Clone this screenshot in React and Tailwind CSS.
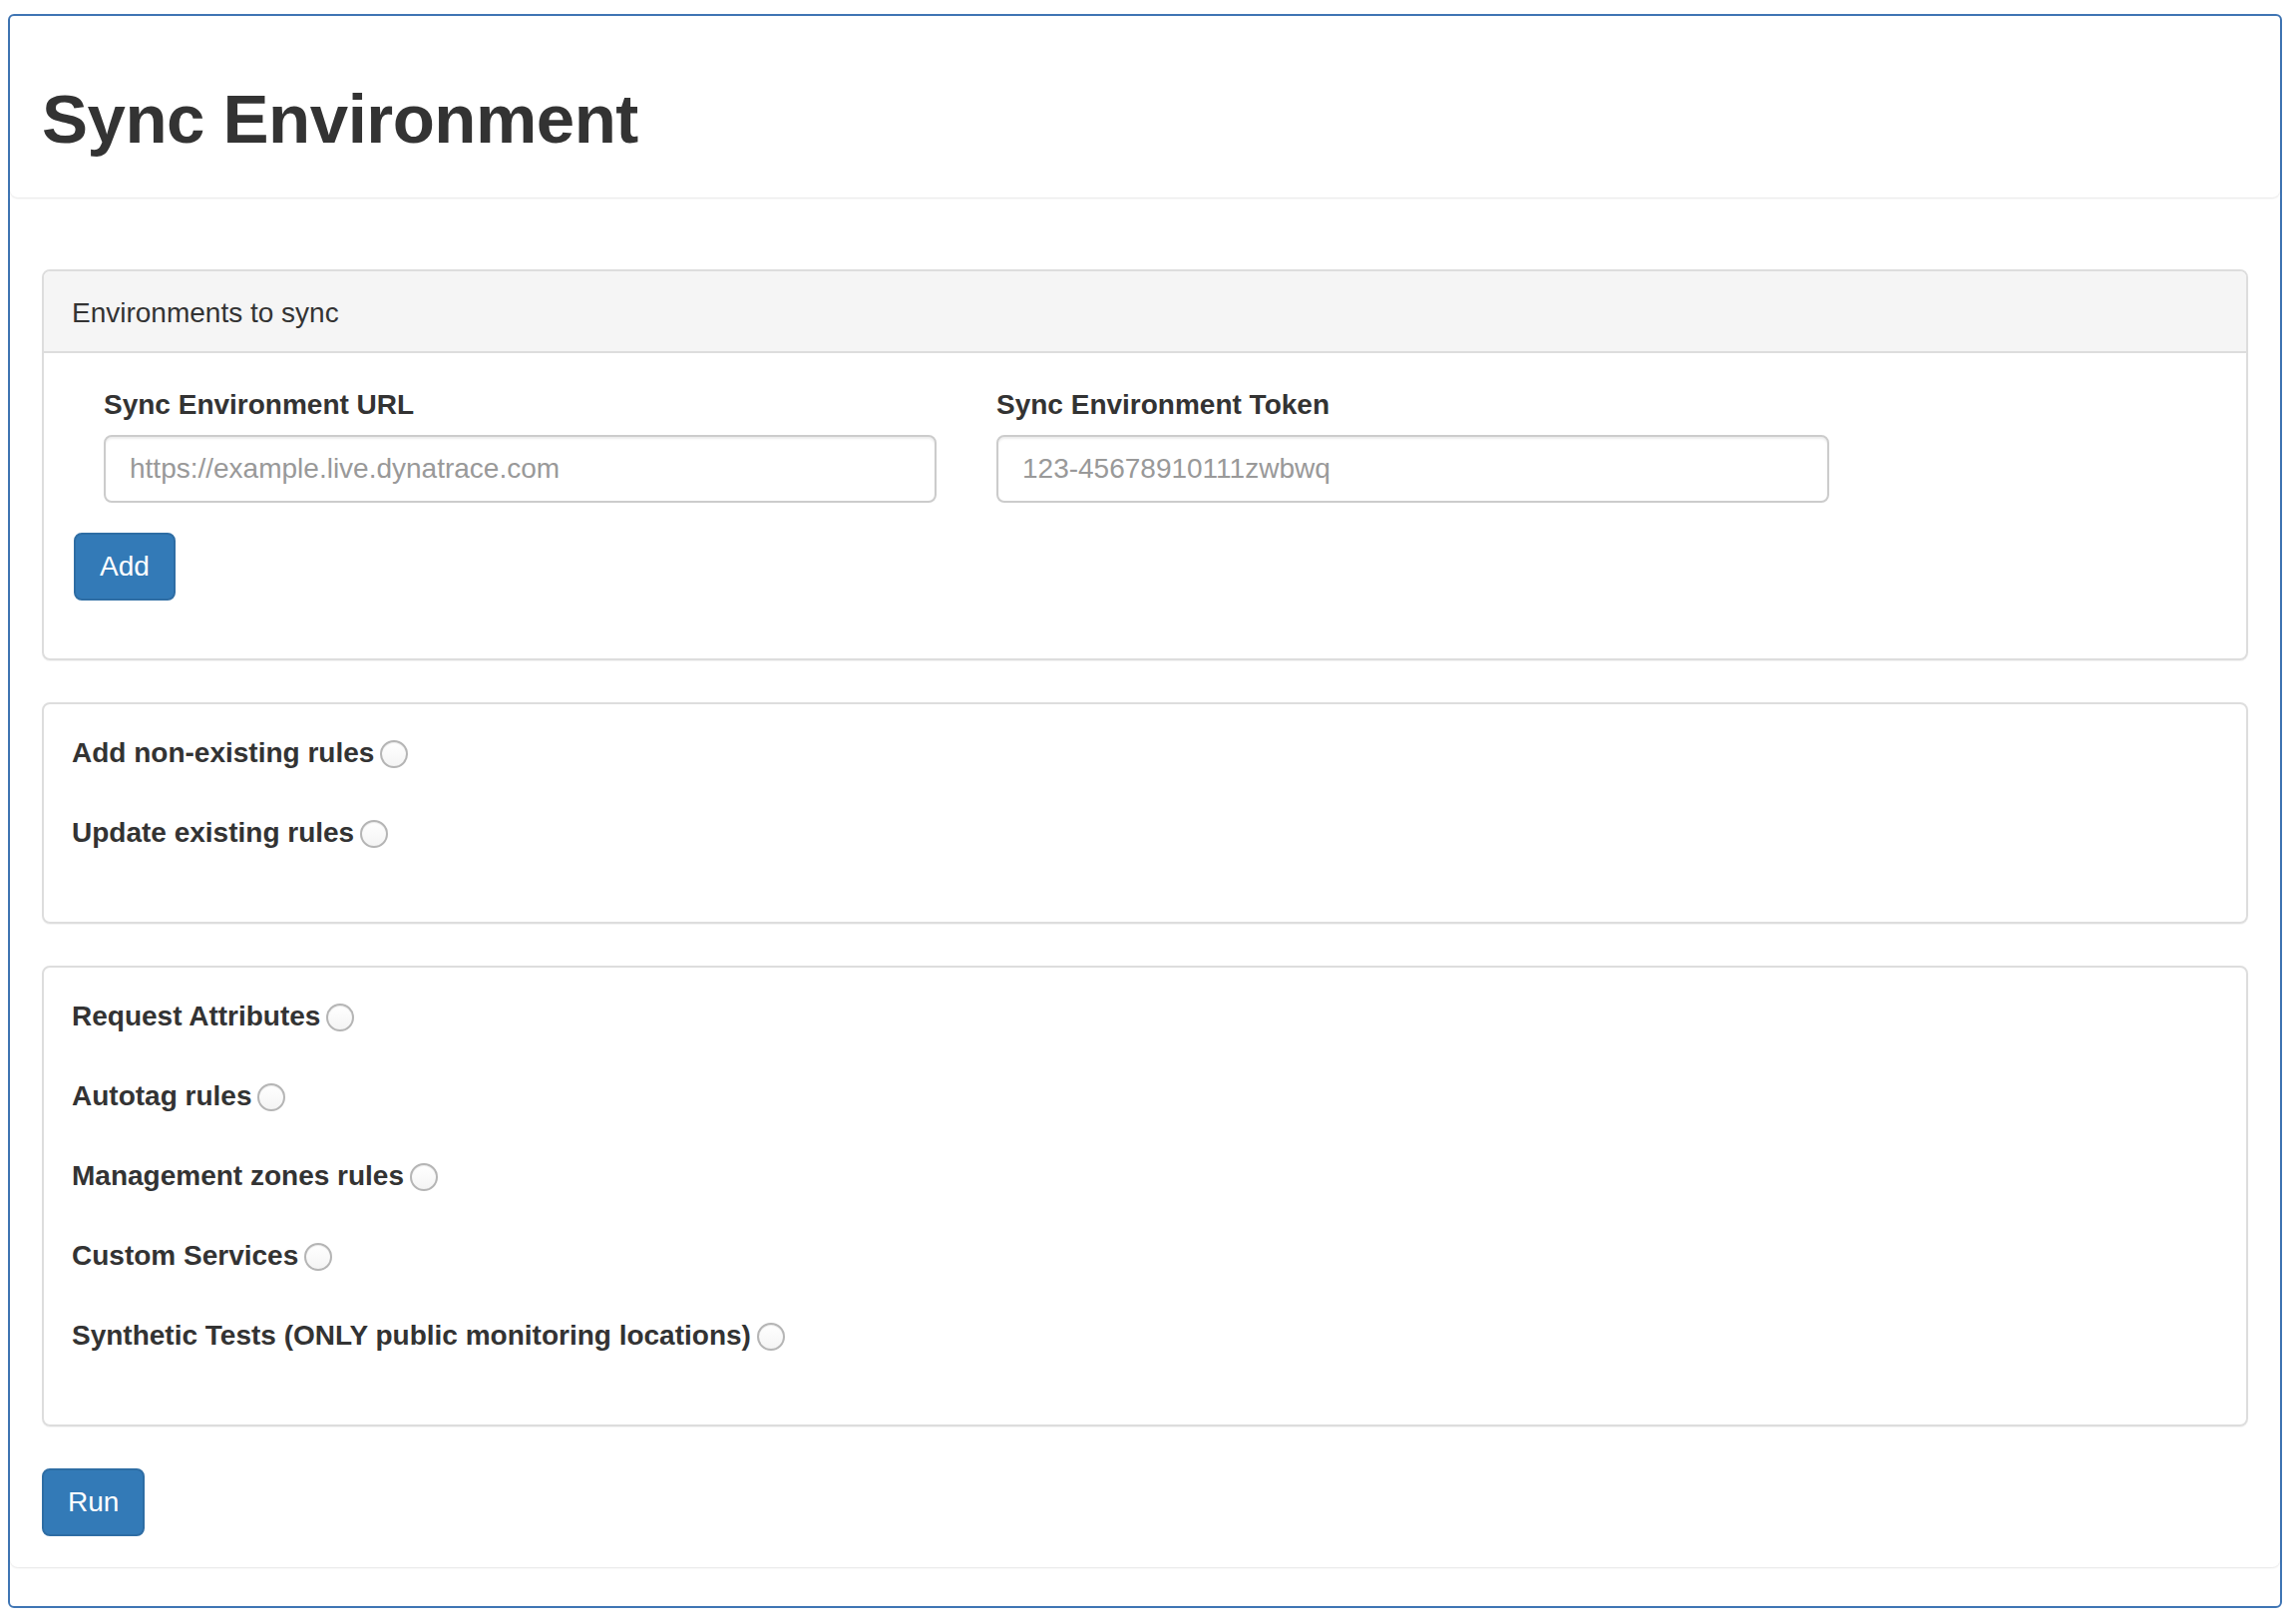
const font = { fontFamily: '"Liberation Sans", Arial, sans-serif' }

const Radio = () => (
  <span className="ml-[6px] inline-block w-[28px] h-[28px] rounded-full border-2 border-[#b5b5b5] bg-gradient-to-b from-white to-[#f4f4f4] shadow-[inset_0_1px_1px_rgba(0,0,0,0.08)] align-middle relative top-[-1px]" />
)

const CheckRow = ({ label }) => (
  <div className="mb-[30px]">
    <label className="inline-block mb-[10px] text-[28px] leading-[40px] font-bold text-[#333]">
      {label}
      <Radio />
    </label>
  </div>
)

const Field = ({ label, placeholder }) => (
  <div className="w-5/12 px-[30px] mb-[30px]">
    <label className="block mb-[10px] text-[28px] leading-[40px] font-bold text-[#333]">{label}</label>
    <input
      className="block w-full h-[68px] px-[24px] text-[28px] border-2 border-[#ccc] rounded-[8px] shadow-[inset_0_2px_2px_rgba(0,0,0,0.075)] placeholder:text-[#999] outline-none"
      placeholder={placeholder}
    />
  </div>
)

const BlueButton = ({ children }) => (
  <button className="h-[68px] px-[24px] text-[28px] leading-[40px] text-white bg-[#337ab7] border-2 border-[#2e6da4] rounded-[8px]">
    {children}
  </button>
)

export default function App() {
  const rules = ["Request Attributes", "Autotag rules", "Management zones rules", "Custom Services", "Synthetic Tests (ONLY public monitoring locations)"]

  return (
    <div className="bg-white min-h-[1626px] pt-[14px] pl-[8px] pr-[14px]" style={font}>
      <div className="border-2 border-[#3f75b4] rounded-[6px] pb-[39px]">
        <div className="rounded-b-[8px] shadow-[0_1px_2px_rgba(0,0,0,0.1)] pt-[64px] pb-[38px] px-[32px]">
          <h1 className="text-[69px] leading-[80px] font-bold text-[#333] tracking-[-0.5px]">Sync Environment</h1>
        </div>

        <div className="rounded-b-[8px] shadow-[0_1px_2px_rgba(0,0,0,0.1)] pt-[72px] pb-[31px] px-[32px] text-[#333]">
          <div className="border-2 border-[#ddd] rounded-[8px] mb-[42px] shadow-[0_1px_1px_rgba(0,0,0,0.05)]">
            <div className="bg-[#f5f5f5] border-b-2 border-[#ddd] rounded-t-[6px] px-[28px] pt-[22px] pb-[18px] text-[28px] leading-[40px]">
              Environments to sync
            </div>
            <div className="pt-[32px] px-[30px] pb-[28px]">
              <div className="flex">
                <Field label="Sync Environment URL" placeholder="https://example.live.dynatrace.com" />
                <Field label="Sync Environment Token" placeholder="123-45678910111zwbwq" />
              </div>
              <div className="mb-[30px]">
                <BlueButton>Add</BlueButton>
              </div>
            </div>
          </div>

          <div className="border-2 border-[#ddd] rounded-[8px] mb-[42px] px-[28px] py-[29px] shadow-[0_1px_1px_rgba(0,0,0,0.05)]">
            <CheckRow label="Add non-existing rules" />
            <CheckRow label="Update existing rules" />
          </div>

          <div className="border-2 border-[#ddd] rounded-[8px] mb-[42px] px-[28px] py-[29px] shadow-[0_1px_1px_rgba(0,0,0,0.05)]">
            {rules.map((r) => (
              <CheckRow key={r} label={r} />
            ))}
          </div>

          <BlueButton>Run</BlueButton>
        </div>
      </div>
    </div>
  )
}
